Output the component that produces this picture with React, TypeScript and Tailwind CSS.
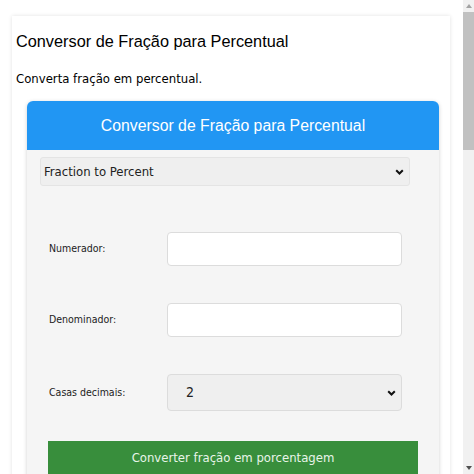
import React from 'react';

const cond = "font-['DejaVu_Sans_Condensed','DejaVu_Sans',sans-serif]";

const Chevron: React.FC = () => (
  <svg width="9" height="6" viewBox="0 0 9 6" className="shrink-0">
    <path d="M1.2 1.2 L4.5 4.5 L7.8 1.2" fill="none" stroke="#111" strokeWidth="2" />
  </svg>
);

const FieldRow: React.FC<{ label: string; className?: string; children: React.ReactNode }> = ({
  label,
  className = '',
  children
}) => (
  <div className={`flex items-center pl-[9px] ${className}`}>
    <label className={`w-[118px] shrink-0 text-[10.5px] text-[#222] ${cond}`}>{label}</label>
    {children}
  </div>
);

// faux window scrollbar on the right edge
const ScrollBar: React.FC = () => (
  <div className="flex w-[11px] shrink-0 flex-col bg-[#f1f1f1]">
    <div className="flex h-[12px] items-center justify-center">
      <svg width="6" height="4" viewBox="0 0 6 4">
        <path d="M0 4 L3 0 L6 4 Z" fill="#a3a3a3" />
      </svg>
    </div>
    <div className="h-[138px] bg-[#c1c1c1]" />
    <div className="flex-1" />
    <div className="flex h-[12px] items-center justify-center">
      <svg width="6" height="4" viewBox="0 0 6 4">
        <path d="M0 0 L6 0 L3 4 Z" fill="#505050" />
      </svg>
    </div>
  </div>
);

export default function App() {
  return (
    <div className="flex h-screen overflow-hidden bg-white font-['Liberation_Sans',Arial,sans-serif]">
      <div className="min-w-0 flex-1 pl-3 pr-[13px] pt-4">
        <div className="bg-white pl-1 pt-[15px] pb-10 shadow-[0_0_4px_rgba(0,0,0,0.12)]">
          <h1 className="text-[16.3px] leading-[20px] font-normal text-black">
            Conversor de Fração para Percentual
          </h1>
          <p className={`mt-[19px] text-[13px] leading-[18px] text-black ${cond}`}>
            Converta fração em percentual.
          </p>

          <div className="ml-[11px] mt-[13px] w-[412px] rounded-t-[6px] shadow-[0_1px_4px_rgba(0,0,0,0.18)]">
            <div className="flex h-[49px] items-center justify-center rounded-t-[6px] bg-[#2196f3] text-[15.8px] text-white">
              Conversor de Fração para Percentual
            </div>

            <div className="bg-[#f5f5f5] px-[13px] pt-[7px] pb-10">
              <div
                className={`flex h-[29px] w-[370px] items-center justify-between rounded-[3px] border border-[#e4e4e4] bg-[#efefef] pl-[3px] pr-[5px] text-[13px] text-[#222] ${cond}`}
              >
                <span>Fraction to Percent</span>
                <Chevron />
              </div>

              <FieldRow label="Numerador:" className="mt-[46px]">
                <input
                  type="text"
                  className="h-[34px] w-[235px] rounded-[4px] border border-[#dcdcdc] bg-white outline-none"
                />
              </FieldRow>

              <FieldRow label="Denominador:" className="mt-[37px]">
                <input
                  type="text"
                  className="h-[34px] w-[235px] rounded-[4px] border border-[#dcdcdc] bg-white outline-none"
                />
              </FieldRow>

              <FieldRow label="Casas decimais:" className="mt-[37px]">
                <div
                  className={`flex h-[37px] w-[235px] items-center justify-between rounded-[4px] border border-[#dcdcdc] bg-[#efefef] pl-[18px] pr-[5px] text-[14px] text-[#222] ${cond}`}
                >
                  <span>2</span>
                  <Chevron />
                </div>
              </FieldRow>

              <button
                className={`ml-[8px] mt-[30px] flex h-[34px] w-[370px] items-center justify-center bg-[#388e3c] text-[13px] text-[#e8f5e9] ${cond}`}
              >
                Converter fração em porcentagem
              </button>
            </div>
          </div>
        </div>
      </div>
      <ScrollBar />
    </div>
  );
}
